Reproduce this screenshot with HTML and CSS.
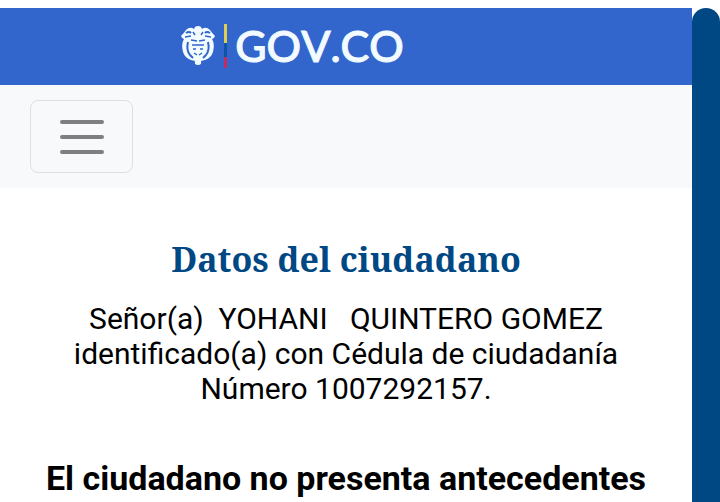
FILE: index.html
```html
<!DOCTYPE html>
<html lang="es">
<head>
<meta charset="utf-8">
<meta name="viewport" content="width=device-width, initial-scale=1">
<title>Datos del ciudadano</title>
<link rel="stylesheet" href="styles.css">
</head>
<body>
<div class="page">
  <div class="content">
    <header class="gov-bar">
      <a class="brand" href="#">
        <svg class="crest" viewBox="0 0 36 42" aria-hidden="true">
          <path fill="#f2fbff" d="M1 11Q4 8 6 5Q10 1 14 4L15 2Q18 0 21 2L22 4Q26 1 30 5Q32 8 35 11Q34 14 32 14Q35 19 33 27Q31 33 25 35L21 36Q22 40 18 40Q14 40 15 36L11 35Q5 33 3 27Q1 19 4 14Q2 14 1 11Z"/>
          <g fill="none" stroke="#3366cc">
            <path stroke-width="2" d="M6 8Q9 6 11 8M30 8Q27 6 25 8"/>
            <path stroke-width="1.5" d="M13 7L15 10M23 7L21 10M5 12L11 11M31 12L25 11"/>
            <path stroke-width="2" d="M8 17Q6 25 10 30L13 33M28 17Q30 25 26 30L23 33"/>
            <path stroke-width="1.5" d="M11 15L17 16M19 16L25 15M12 20H24M13 24H16M20 24H23M14 28L17 30M22 28L19 30"/>
          </g>
        </svg>
        <span class="flag" aria-hidden="true"></span>
        <span class="brand-name">GOV.CO</span>
      </a>
    </header>
    <nav class="menu-bar">
      <button class="menu-toggle" type="button" aria-label="Menú">
        <svg class="menu-icon" viewBox="0 0 45 35" aria-hidden="true">
          <path d="M3 3H43M3 18H43M3 33H43" fill="none" stroke="#7e7f80" stroke-width="4" stroke-linecap="round"/>
        </svg>
      </button>
    </nav>
    <main class="result">
      <h1 class="title">Datos del ciudadano</h1>
      <p class="citizen">Señor(a) &nbsp;YOHANI &nbsp; QUINTERO GOMEZ<br>identificado(a) con Cédula de ciudadanía<br>Número 1007292157.</p>
      <p class="verdict">El ciudadano no presenta antecedentes</p>
    </main>
  </div>
  <aside class="rail"></aside>
</div>
</body>
</html>
```
FILE: styles.css
```css
* {
  box-sizing: border-box;
}

body {
  margin: 0;
  background: #fff;
  color: #000;
  font-family: Roboto, "Liberation Sans", sans-serif;
}

.page {
  display: flex;
  min-height: 100vh;
  padding-top: 8px;
}

.content {
  flex: 1;
  min-width: 0;
}

.rail {
  flex: 0 0 28px;
  border-radius: 14px 14px 0 0;
  background: #004884;
}

.gov-bar {
  display: flex;
  justify-content: center;
  padding: 15px 108px 17px 0;
  background: #3366cc;
}

.brand {
  display: flex;
  align-items: center;
  height: 45px;
  color: #f2fbff;
  text-decoration: none;
}

.crest {
  width: 36px;
  height: 42px;
}

.flag {
  width: 3px;
  height: 44px;
  margin: 0 8px;
  background: linear-gradient(#dfcf50 44%, #0f55a5 44% 74%, #c42b5c 74%);
}

.brand-name {
  font: 500 43px/44px Lato, sans-serif;
  font-kerning: none;
  -webkit-text-stroke: 1px #f2fbff;
}

.menu-bar {
  padding: 15px 30px;
  background: #f8f9fa;
}

.menu-toggle {
  display: flex;
  align-items: center;
  justify-content: center;
  padding: 18px 28px;
  border: 1px solid #dedfe0;
  border-radius: 8px;
  background: transparent;
}

.menu-icon {
  width: 45px;
  height: 35px;
}

.result {
  padding: 48px 20px 0;
  text-align: center;
}

.title {
  margin: 0;
  color: #004884;
  font: bold 34px/46px "Noto Serif", "DejaVu Serif Condensed", "DejaVu Serif", serif;
}

.citizen {
  margin: 19px 0 0;
  font-size: 30px;
  line-height: 35px;
}

.verdict {
  margin: 52px 0 0;
  font-size: 34px;
  font-weight: 700;
  line-height: 40px;
}
```
